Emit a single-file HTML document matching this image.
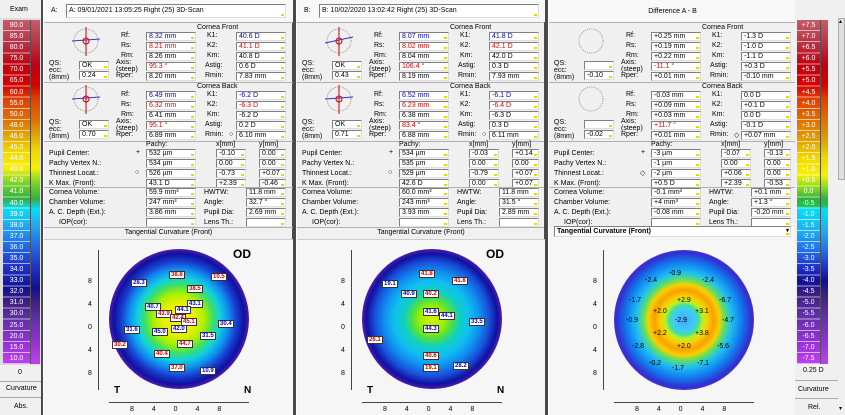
<!DOCTYPE html><html><head><meta charset="utf-8"><style>
*{box-sizing:border-box;margin:0;padding:0}
body{width:845px;height:415px;background:#4a4a4a;font-family:"Liberation Sans",sans-serif;font-size:7px;color:#000;position:relative;overflow:hidden}
div,span{position:absolute}
.p{top:0;height:415px;width:247px;background:#f0f0f0;border-left:1px solid #fff}
.b{height:9px;background:#fff;border:1px solid #808080;border-right-color:#ddd;border-bottom-color:#ddd;padding-left:2px;line-height:7px;font-size:7px;white-space:nowrap}
.b:after{content:"";position:absolute;right:1px;bottom:1px;width:3px;height:2px;background:#e8d800}
.l{white-space:nowrap;line-height:8px}
.t{white-space:nowrap}
.hr{left:0;width:247px;height:1px;background:#b0b0b0}
.bl{color:#0000c0}.rd{color:#e00000}
.map{border-radius:50%}
.lb{font-size:6px;padding:0 1px;background:#fff;border:1px solid #333;line-height:6px;font-weight:bold}
.grid{background-image:repeating-linear-gradient(transparent 0,transparent 10.1px,rgba(255,255,255,.6) 10.1px,rgba(255,255,255,.6) 11.1px)}
</style></head><body>
<!-- left scale -->
<div style="left:0;top:0;width:41px;height:415px;background:#f0f0f0"></div>
<div class="t" style="left:10px;top:6px">Exam</div>
<div style="left:0;top:18px;width:41px;height:347px;background:#ddd"></div>
<div style="left:3px;top:20px;width:37px;height:344px;background:linear-gradient(#c85a6a 0,#b83848 6%,#c00010 13%,#d80000 19%,#e04000 23%,#e07000 29%,#e0a000 33%,#f0d800 38%,#f8f000 43%,#80d820 47%,#30b040 52%,#00e0f8 55%,#20b0f0 59%,#2070e8 65%,#2030c8 72%,#101090 78%,#402080 82%,#6030a8 87%,#9030d0 93%,#c040f0 100%)"></div>
<div class="grid" style="left:3px;top:20px;width:27px;height:344px"></div>
<div style="left:30px;top:20px;width:1px;height:344px;background:#555"></div>
<div style="left:3px;top:20px;width:27px;height:344px;color:#fff;font-size:7px;line-height:11.1px;text-align:center">90.0<br>85.0<br>80.0<br>75.0<br>70.0<br>65.0<br>60.0<br>55.0<br>50.0<br>48.0<br>46.0<br>45.0<br>44.0<br>43.0<br>42.0<br>41.0<br>40.0<br>39.0<br>38.0<br>37.0<br>36.0<br>35.0<br>34.0<br>33.0<br>32.0<br>31.0<br>30.0<br>25.0<br>20.0<br>15.0<br>10.0</div>
<div class="t" style="left:18px;top:369px">0</div>
<div style="left:0;top:381px;width:41px;height:1px;background:#aaa"></div>
<div class="t" style="left:6px;top:385px">Curvature</div>
<div style="left:0;top:397px;width:41px;height:1px;background:#aaa"></div>
<div class="t" style="left:14px;top:403px">Abs.</div>

<!-- PANEL A -->
<div class="p" style="left:43px;width:249px">
<div style="left:0;top:0;width:249px;height:22px;background:#f8f8f8"></div>
<div class="t" style="left:7px;top:7px">A:</div>
<div class="b" style="left:22px;top:4px;width:220px;height:14px;line-height:11px">A: 09/01/2021 13:05:25 Right (25) 3D-Scan</div>
<div class="hr" style="top:22px;width:249px"></div>
<svg style="position:absolute;left:20px;top:24px" width="44" height="36"><circle cx="22" cy="17" r="12" fill="none" stroke="#999" stroke-dasharray="1 1"/><line x1="22" y1="3" x2="22" y2="32" stroke="#c00"/><line x1="8" y1="17" x2="36" y2="15" stroke="#33c"/><circle cx="22" cy="17" r="3" fill="none" stroke="#c00"/></svg>
<div class="t" style="left:153px;top:24px">Cornea Front</div>
<div class="l" style="left:77px;top:32px">Rf:</div><div class="b bl" style="left:102px;top:32px;width:50px">8.32 mm</div>
<div class="l" style="left:77px;top:42px">Rs:</div><div class="b rd" style="left:102px;top:42px;width:50px">8.21 mm</div>
<div class="l" style="left:77px;top:52px">Rm:</div><div class="b" style="left:102px;top:52px;width:50px">8.26 mm</div>
<div class="l" style="left:72px;top:59px;line-height:7px">Axis:<br>(steep)</div><div class="b rd" style="left:102px;top:62px;width:50px">95.3 °</div>
<div class="l" style="left:72px;top:72px">Rper:</div><div class="b" style="left:102px;top:72px;width:50px">8.20 mm</div>
<div class="l" style="left:163px;top:32px">K1:</div><div class="b bl" style="left:192px;top:32px;width:50px">40.6 D</div>
<div class="l" style="left:163px;top:42px">K2:</div><div class="b rd" style="left:192px;top:42px;width:50px">41.1 D</div>
<div class="l" style="left:163px;top:52px">Km:</div><div class="b" style="left:192px;top:52px;width:50px">40.8 D</div>
<div class="l" style="left:161px;top:62px">Astig:</div><div class="b" style="left:192px;top:62px;width:50px">0.6 D</div>
<div class="l" style="left:161px;top:72px">Rmin:</div><div class="b" style="left:192px;top:72px;width:50px">7.83 mm</div>
<div class="l" style="left:5px;top:60px;line-height:7px">QS:<br>ecc:<br>(8mm)</div>
<div class="b" style="left:35px;top:61px;width:30px">OK</div><div class="b" style="left:35px;top:71px;width:30px">0.24</div>
<div class="hr" style="top:82px;width:249px"></div>
<svg style="position:absolute;left:20px;top:82px" width="44" height="36"><circle cx="22" cy="17" r="12" fill="none" stroke="#999" stroke-dasharray="1 1"/><line x1="22" y1="3" x2="22" y2="32" stroke="#c00"/><line x1="8" y1="17" x2="36" y2="15" stroke="#33c"/><circle cx="22" cy="17" r="3" fill="none" stroke="#c00"/></svg>
<div class="t" style="left:153px;top:83px">Cornea Back</div>
<div class="l" style="left:77px;top:91px">Rf:</div><div class="b bl" style="left:102px;top:91px;width:50px">6.49 mm</div>
<div class="l" style="left:77px;top:101px">Rs:</div><div class="b rd" style="left:102px;top:101px;width:50px">6.32 mm</div>
<div class="l" style="left:77px;top:111px">Rm:</div><div class="b" style="left:102px;top:111px;width:50px">6.41 mm</div>
<div class="l" style="left:72px;top:118px;line-height:7px">Axis:<br>(steep)</div><div class="b rd" style="left:102px;top:121px;width:50px">95.1 °</div>
<div class="l" style="left:72px;top:131px">Rper:</div><div class="b" style="left:102px;top:131px;width:50px">6.89 mm</div>
<div class="l" style="left:163px;top:91px">K1:</div><div class="b bl" style="left:192px;top:91px;width:50px">-6.2 D</div>
<div class="l" style="left:163px;top:101px">K2:</div><div class="b rd" style="left:192px;top:101px;width:50px">-6.3 D</div>
<div class="l" style="left:163px;top:111px">Km:</div><div class="b" style="left:192px;top:111px;width:50px">-6.2 D</div>
<div class="l" style="left:161px;top:121px">Astig:</div><div class="b" style="left:192px;top:121px;width:50px">0.2 D</div>
<div class="l" style="left:161px;top:131px">Rmin:</div><div class="t" style="left:185px;top:131px">○</div><div class="b" style="left:192px;top:131px;width:50px">6.10 mm</div>
<div class="l" style="left:5px;top:119px;line-height:7px">QS:<br>ecc:<br>(8mm)</div>
<div class="b" style="left:35px;top:120px;width:30px">OK</div><div class="b" style="left:35px;top:130px;width:30px">0.70</div>
<div class="hr" style="top:141px;width:249px"></div>
<div class="t" style="left:102px;top:141px">Pachy:</div><div class="t" style="left:172px;top:141px">x[mm]</div><div class="t" style="left:215px;top:141px">y[mm]</div>
<div class="l" style="left:5px;top:150px">Pupil Center:</div><div class="t" style="left:92px;top:149px">+</div>
<div class="l" style="left:5px;top:160px">Pachy Vertex N.:</div>
<div class="l" style="left:5px;top:170px">Thinnest Locat.:</div><div class="t" style="left:91px;top:169px">○</div>
<div class="l" style="left:5px;top:180px">K Max. (Front):</div>
<div class="b" style="left:102px;top:149px;width:50px">532 µm</div><div class="b" style="left:172px;top:149px;width:30px">-0.10</div><div class="b" style="left:215px;top:149px;width:27px">0.00</div>
<div class="b" style="left:102px;top:159px;width:50px">534 µm</div><div class="b" style="left:172px;top:159px;width:30px">0.00</div><div class="b" style="left:215px;top:159px;width:27px">0.00</div>
<div class="b" style="left:102px;top:169px;width:50px">526 µm</div><div class="b" style="left:172px;top:169px;width:30px">-0.73</div><div class="b" style="left:215px;top:169px;width:27px">+0.07</div>
<div class="b" style="left:102px;top:179px;width:50px">43.1 D</div><div class="b" style="left:172px;top:179px;width:30px">+2.39</div><div class="b" style="left:215px;top:179px;width:27px">-0.46</div>
<div class="hr" style="top:187px;width:249px"></div>
<div class="l" style="left:5px;top:189px">Cornea Volume:</div><div class="b" style="left:102px;top:188px;width:50px">59.9 mm³</div><div class="l" style="left:160px;top:189px">HWTW:</div><div class="b" style="left:202px;top:188px;width:40px">11.8 mm</div>
<div class="l" style="left:5px;top:199px">Chamber Volume:</div><div class="b" style="left:102px;top:198px;width:50px">247 mm³</div><div class="l" style="left:160px;top:199px">Angle:</div><div class="b" style="left:202px;top:198px;width:40px">32.7 °</div>
<div class="l" style="left:5px;top:209px">A. C. Depth (Ext.):</div><div class="b" style="left:102px;top:208px;width:50px">3.86 mm</div><div class="l" style="left:160px;top:209px">Pupil Dia:</div><div class="b" style="left:202px;top:208px;width:40px">2.69 mm</div>
<div class="l" style="left:15px;top:219px">IOP(cor):</div><div class="b" style="left:102px;top:218px;width:50px"></div><div class="l" style="left:160px;top:219px">Lens Th.:</div><div class="b" style="left:202px;top:218px;width:40px"></div>
<div class="hr" style="top:227px;width:249px"></div>
<div class="t" style="left:0;width:249px;text-align:center;top:229px">Tangential Curvature (Front)</div>
<div style="left:0;top:239px;width:249px;height:176px;background:#f6f6f6;border-top:1px solid #ccc"></div>
<div style="left:54px;top:250px;width:1px;height:140px;background:#444"></div>
<div class="t" style="left:44px;top:270px;line-height:23px">8<br>4<br>0<br>4<br>8</div>
<div style="left:65px;top:402px;width:140px;height:1px;background:#444"></div>
<div class="t" style="left:86px;top:406px;word-spacing:16px">8 4 0 4 8</div>
<div class="map" style="left:65px;top:249px;width:140px;height:140px;background:radial-gradient(circle at 50% 50%,#f0f000 0,#e8f000 16%,#a8f000 26%,#40e060 34%,#10d0e0 42%,#1090f0 50%,#1840d0 58%,#1010a0 66%,#6020b0 72%,#9028d8 78%,#a030e0 100%)"></div>
<div class="t" style="left:189px;top:247px;font-size:12px;font-weight:bold">OD</div>
<div class="t" style="left:70px;top:385px;font-size:10px;font-weight:bold">T</div>
<div class="t" style="left:200px;top:385px;font-size:10px;font-weight:bold">N</div>
<div class="lb" style="left:125px;top:271px;color:#c00">38.8</div><div class="lb" style="left:167px;top:273px;color:#c00">10.5</div><div class="lb" style="left:87px;top:279px;color:#00c">28.3</div>
<div class="lb" style="left:143px;top:285px;color:#c00">38.5</div><div class="lb" style="left:101px;top:303px;color:#00c">40.7</div><div class="lb" style="left:143px;top:300px;color:#00c">43.1</div>
<div class="lb" style="left:112px;top:310px;color:#c00">43.9</div><div class="lb" style="left:126px;top:314px;color:#c00">42.4</div><div class="lb" style="left:131px;top:306px;color:#00c">44.1</div>
<div class="lb" style="left:137px;top:318px;color:#c00">45.1</div><div class="lb" style="left:174px;top:320px;color:#00c">30.4</div><div class="lb" style="left:80px;top:326px;color:#00c">31.6</div>
<div class="lb" style="left:108px;top:328px;color:#00c">45.0</div><div class="lb" style="left:127px;top:325px;color:#00c">42.0</div><div class="lb" style="left:156px;top:332px;color:#00c">31.5</div>
<div class="lb" style="left:68px;top:341px;color:#c00">30.2</div><div class="lb" style="left:133px;top:340px;color:#c00">44.7</div><div class="lb" style="left:110px;top:350px;color:#c00">40.4</div>
<div class="lb" style="left:125px;top:364px;color:#c00">37.0</div><div class="lb" style="left:156px;top:367px;color:#00c">10.9</div>
</div>

<!-- PANEL B -->
<div class="p" style="left:296px;width:248px">
<div style="left:0;top:0;width:248px;height:22px;background:#f8f8f8"></div>
<div class="t" style="left:7px;top:7px">B:</div>
<div class="b" style="left:22px;top:4px;width:220px;height:14px;line-height:11px">B: 10/02/2020 13:02:42 Right (25) 3D-Scan</div>
<div class="hr" style="top:22px"></div>
<svg style="position:absolute;left:20px;top:24px" width="44" height="36"><circle cx="22" cy="17" r="12" fill="none" stroke="#999" stroke-dasharray="1 1"/><line x1="22" y1="3" x2="22" y2="32" stroke="#c00"/><line x1="8" y1="19" x2="36" y2="13" stroke="#33c"/><circle cx="22" cy="17" r="3" fill="none" stroke="#c00"/></svg>
<div class="t" style="left:153px;top:24px">Cornea Front</div>
<div class="l" style="left:77px;top:32px">Rf:</div><div class="b bl" style="left:102px;top:32px;width:50px">8.07 mm</div>
<div class="l" style="left:77px;top:42px">Rs:</div><div class="b rd" style="left:102px;top:42px;width:50px">8.02 mm</div>
<div class="l" style="left:77px;top:52px">Rm:</div><div class="b" style="left:102px;top:52px;width:50px">8.04 mm</div>
<div class="l" style="left:72px;top:59px;line-height:7px">Axis:<br>(steep)</div><div class="b rd" style="left:102px;top:62px;width:50px">106.4 °</div>
<div class="l" style="left:72px;top:72px">Rper:</div><div class="b" style="left:102px;top:72px;width:50px">8.19 mm</div>
<div class="l" style="left:163px;top:32px">K1:</div><div class="b bl" style="left:192px;top:32px;width:50px">41.8 D</div>
<div class="l" style="left:163px;top:42px">K2:</div><div class="b rd" style="left:192px;top:42px;width:50px">42.1 D</div>
<div class="l" style="left:163px;top:52px">Km:</div><div class="b" style="left:192px;top:52px;width:50px">42.0 D</div>
<div class="l" style="left:161px;top:62px">Astig:</div><div class="b" style="left:192px;top:62px;width:50px">0.3 D</div>
<div class="l" style="left:161px;top:72px">Rmin:</div><div class="b" style="left:192px;top:72px;width:50px">7.93 mm</div>
<div class="l" style="left:5px;top:60px;line-height:7px">QS:<br>ecc:<br>(8mm)</div>
<div class="b" style="left:35px;top:61px;width:30px">OK</div><div class="b" style="left:35px;top:71px;width:30px">0.43</div>
<div class="hr" style="top:82px"></div>
<svg style="position:absolute;left:20px;top:82px" width="44" height="36"><circle cx="22" cy="17" r="12" fill="none" stroke="#999" stroke-dasharray="1 1"/><line x1="22" y1="3" x2="22" y2="32" stroke="#c00"/><line x1="8" y1="17" x2="36" y2="15" stroke="#33c"/><circle cx="22" cy="17" r="3" fill="none" stroke="#c00"/></svg>
<div class="t" style="left:153px;top:83px">Cornea Back</div>
<div class="l" style="left:77px;top:91px">Rf:</div><div class="b bl" style="left:102px;top:91px;width:50px">6.52 mm</div>
<div class="l" style="left:77px;top:101px">Rs:</div><div class="b rd" style="left:102px;top:101px;width:50px">6.23 mm</div>
<div class="l" style="left:77px;top:111px">Rm:</div><div class="b" style="left:102px;top:111px;width:50px">6.38 mm</div>
<div class="l" style="left:72px;top:118px;line-height:7px">Axis:<br>(steep)</div><div class="b rd" style="left:102px;top:121px;width:50px">83.4 °</div>
<div class="l" style="left:72px;top:131px">Rper:</div><div class="b" style="left:102px;top:131px;width:50px">6.88 mm</div>
<div class="l" style="left:163px;top:91px">K1:</div><div class="b bl" style="left:192px;top:91px;width:50px">-6.1 D</div>
<div class="l" style="left:163px;top:101px">K2:</div><div class="b rd" style="left:192px;top:101px;width:50px">-6.4 D</div>
<div class="l" style="left:163px;top:111px">Km:</div><div class="b" style="left:192px;top:111px;width:50px">-6.3 D</div>
<div class="l" style="left:161px;top:121px">Astig:</div><div class="b" style="left:192px;top:121px;width:50px">0.3 D</div>
<div class="l" style="left:161px;top:131px">Rmin:</div><div class="t" style="left:185px;top:131px">○</div><div class="b" style="left:192px;top:131px;width:50px">6.11 mm</div>
<div class="l" style="left:5px;top:119px;line-height:7px">QS:<br>ecc:<br>(8mm)</div>
<div class="b" style="left:35px;top:120px;width:30px">OK</div><div class="b" style="left:35px;top:130px;width:30px">0.71</div>
<div class="hr" style="top:141px"></div>
<div class="t" style="left:102px;top:141px">Pachy:</div><div class="t" style="left:172px;top:141px">x[mm]</div><div class="t" style="left:215px;top:141px">y[mm]</div>
<div class="l" style="left:5px;top:150px">Pupil Center:</div><div class="t" style="left:92px;top:149px">+</div>
<div class="l" style="left:5px;top:160px">Pachy Vertex N.:</div>
<div class="l" style="left:5px;top:170px">Thinnest Locat.:</div><div class="t" style="left:91px;top:169px">○</div>
<div class="l" style="left:5px;top:180px">K Max. (Front):</div>
<div class="b" style="left:102px;top:149px;width:50px">534 µm</div><div class="b" style="left:172px;top:149px;width:30px">-0.03</div><div class="b" style="left:215px;top:149px;width:27px">+0.14</div>
<div class="b" style="left:102px;top:159px;width:50px">535 µm</div><div class="b" style="left:172px;top:159px;width:30px">0.00</div><div class="b" style="left:215px;top:159px;width:27px">0.00</div>
<div class="b" style="left:102px;top:169px;width:50px">529 µm</div><div class="b" style="left:172px;top:169px;width:30px">-0.79</div><div class="b" style="left:215px;top:169px;width:27px">+0.07</div>
<div class="b" style="left:102px;top:179px;width:50px">42.6 D</div><div class="b" style="left:172px;top:179px;width:30px">0.00</div><div class="b" style="left:215px;top:179px;width:27px">+0.07</div>
<div class="hr" style="top:187px"></div>
<div class="l" style="left:5px;top:189px">Cornea Volume:</div><div class="b" style="left:102px;top:188px;width:50px">60.0 mm³</div><div class="l" style="left:160px;top:189px">HWTW:</div><div class="b" style="left:202px;top:188px;width:40px">11.8 mm</div>
<div class="l" style="left:5px;top:199px">Chamber Volume:</div><div class="b" style="left:102px;top:198px;width:50px">243 mm³</div><div class="l" style="left:160px;top:199px">Angle:</div><div class="b" style="left:202px;top:198px;width:40px">31.5 °</div>
<div class="l" style="left:5px;top:209px">A. C. Depth (Ext.):</div><div class="b" style="left:102px;top:208px;width:50px">3.93 mm</div><div class="l" style="left:160px;top:209px">Pupil Dia:</div><div class="b" style="left:202px;top:208px;width:40px">2.89 mm</div>
<div class="l" style="left:15px;top:219px">IOP(cor):</div><div class="b" style="left:102px;top:218px;width:50px"></div><div class="l" style="left:160px;top:219px">Lens Th.:</div><div class="b" style="left:202px;top:218px;width:40px"></div>
<div class="hr" style="top:227px"></div>
<div class="t" style="left:0;width:248px;text-align:center;top:229px">Tangential Curvature (Front)</div>
<div style="left:0;top:239px;width:248px;height:176px;background:#f6f6f6;border-top:1px solid #ccc"></div>
<div style="left:54px;top:250px;width:1px;height:140px;background:#444"></div>
<div class="t" style="left:44px;top:270px;line-height:23px">8<br>4<br>0<br>4<br>8</div>
<div style="left:65px;top:402px;width:140px;height:1px;background:#444"></div>
<div class="t" style="left:86px;top:406px;word-spacing:16px">8 4 0 4 8</div>
<div class="map" style="left:65px;top:249px;width:140px;height:140px;background:radial-gradient(circle at 50% 50%,#d8f000 0,#a0f000 12%,#50e040 20%,#10d0c0 28%,#10c0f0 38%,#1090f0 48%,#1850d8 58%,#1010a0 66%,#6020b0 72%,#9028d8 78%,#a030e0 100%)"></div>
<div class="t" style="left:189px;top:247px;font-size:12px;font-weight:bold">OD</div>
<div class="t" style="left:70px;top:385px;font-size:10px;font-weight:bold">T</div>
<div class="t" style="left:200px;top:385px;font-size:10px;font-weight:bold">N</div>
<div class="lb" style="left:122px;top:270px;color:#c00">41.8</div><div class="lb" style="left:85px;top:280px;color:#00c">19.1</div><div class="lb" style="left:155px;top:277px;color:#c00">41.8</div>
<div class="lb" style="left:104px;top:290px;color:#00c">40.9</div><div class="lb" style="left:126px;top:290px;color:#c00">40.2</div><div class="lb" style="left:126px;top:308px;color:#00c">41.6</div>
<div class="lb" style="left:142px;top:312px;color:#00c">44.1</div><div class="lb" style="left:172px;top:318px;color:#00c">33.5</div><div class="lb" style="left:126px;top:325px;color:#00c">44.3</div>
<div class="lb" style="left:70px;top:336px;color:#c00">26.1</div><div class="lb" style="left:126px;top:352px;color:#c00">40.6</div><div class="lb" style="left:156px;top:362px;color:#00c">28.2</div><div class="lb" style="left:126px;top:364px;color:#c00">19.1</div>
</div>

<!-- PANEL C -->
<div class="p" style="left:548px;width:247px">
<div style="left:0;top:0;width:247px;height:22px;background:#f8f8f8"></div>
<div class="t" style="left:0;width:247px;text-align:center;top:8px">Difference A - B</div>
<div class="hr" style="top:22px"></div>
<svg style="position:absolute;left:20px;top:24px" width="44" height="36"><circle cx="22" cy="17" r="12" fill="none" stroke="#999" stroke-dasharray="1 1"/></svg>
<div class="t" style="left:153px;top:24px">Cornea Front</div>
<div class="l" style="left:77px;top:32px">Rf:</div><div class="b" style="left:102px;top:32px;width:50px">+0.25 mm</div>
<div class="l" style="left:77px;top:42px">Rs:</div><div class="b" style="left:102px;top:42px;width:50px">+0.19 mm</div>
<div class="l" style="left:77px;top:52px">Rm:</div><div class="b" style="left:102px;top:52px;width:50px">+0.22 mm</div>
<div class="l" style="left:72px;top:59px;line-height:7px">Axis:<br>(steep)</div><div class="b rd" style="left:102px;top:62px;width:50px">-11.1 °</div>
<div class="l" style="left:72px;top:72px">Rper:</div><div class="b" style="left:102px;top:72px;width:50px">+0.01 mm</div>
<div class="l" style="left:163px;top:32px">K1:</div><div class="b" style="left:192px;top:32px;width:50px">-1.3 D</div>
<div class="l" style="left:163px;top:42px">K2:</div><div class="b" style="left:192px;top:42px;width:50px">-1.0 D</div>
<div class="l" style="left:163px;top:52px">Km:</div><div class="b" style="left:192px;top:52px;width:50px">-1.1 D</div>
<div class="l" style="left:161px;top:62px">Astig:</div><div class="b" style="left:192px;top:62px;width:50px">+0.3 D</div>
<div class="l" style="left:161px;top:72px">Rmin:</div><div class="b" style="left:192px;top:72px;width:50px">-0.10 mm</div>
<div class="l" style="left:5px;top:60px;line-height:7px">QS:<br>ecc:<br>(8mm)</div>
<div class="b" style="left:35px;top:61px;width:30px"></div><div class="b" style="left:35px;top:71px;width:30px">-0.10</div>
<div class="hr" style="top:82px"></div>
<svg style="position:absolute;left:20px;top:82px" width="44" height="36"><circle cx="22" cy="17" r="12" fill="none" stroke="#999" stroke-dasharray="1 1"/></svg>
<div class="t" style="left:153px;top:83px">Cornea Back</div>
<div class="l" style="left:77px;top:91px">Rf:</div><div class="b" style="left:102px;top:91px;width:50px">-0.03 mm</div>
<div class="l" style="left:77px;top:101px">Rs:</div><div class="b" style="left:102px;top:101px;width:50px">+0.09 mm</div>
<div class="l" style="left:77px;top:111px">Rm:</div><div class="b" style="left:102px;top:111px;width:50px">+0.03 mm</div>
<div class="l" style="left:72px;top:118px;line-height:7px">Axis:<br>(steep)</div><div class="b rd" style="left:102px;top:121px;width:50px">+11.7 °</div>
<div class="l" style="left:72px;top:131px">Rper:</div><div class="b" style="left:102px;top:131px;width:50px">+0.01 mm</div>
<div class="l" style="left:163px;top:91px">K1:</div><div class="b" style="left:192px;top:91px;width:50px">0.0 D</div>
<div class="l" style="left:163px;top:101px">K2:</div><div class="b" style="left:192px;top:101px;width:50px">+0.1 D</div>
<div class="l" style="left:163px;top:111px">Km:</div><div class="b" style="left:192px;top:111px;width:50px">0.0 D</div>
<div class="l" style="left:161px;top:121px">Astig:</div><div class="b" style="left:192px;top:121px;width:50px">-0.1 D</div>
<div class="l" style="left:161px;top:131px">Rmin:</div><div class="t" style="left:185px;top:131px">◇</div><div class="b" style="left:192px;top:131px;width:50px">+0.07 mm</div>
<div class="l" style="left:5px;top:119px;line-height:7px">QS:<br>ecc:<br>(8mm)</div>
<div class="b" style="left:35px;top:120px;width:30px"></div><div class="b" style="left:35px;top:130px;width:30px">-0.02</div>
<div class="hr" style="top:141px"></div>
<div class="t" style="left:102px;top:141px">Pachy:</div><div class="t" style="left:172px;top:141px">x[mm]</div><div class="t" style="left:215px;top:141px">y[mm]</div>
<div class="l" style="left:5px;top:150px">Pupil Center:</div><div class="t" style="left:92px;top:149px">+</div>
<div class="l" style="left:5px;top:160px">Pachy Vertex N.:</div>
<div class="l" style="left:5px;top:170px">Thinnest Locat.:</div><div class="t" style="left:91px;top:169px">◇</div>
<div class="l" style="left:5px;top:180px">K Max. (Front):</div>
<div class="b" style="left:102px;top:149px;width:50px">-3 µm</div><div class="b" style="left:172px;top:149px;width:30px">-0.07</div><div class="b" style="left:215px;top:149px;width:27px">-0.13</div>
<div class="b" style="left:102px;top:159px;width:50px">-1 µm</div><div class="b" style="left:172px;top:159px;width:30px">0.00</div><div class="b" style="left:215px;top:159px;width:27px">0.00</div>
<div class="b" style="left:102px;top:169px;width:50px">-2 µm</div><div class="b" style="left:172px;top:169px;width:30px">+0.06</div><div class="b" style="left:215px;top:169px;width:27px">0.00</div>
<div class="b" style="left:102px;top:179px;width:50px">+0.5 D</div><div class="b" style="left:172px;top:179px;width:30px">+2.39</div><div class="b" style="left:215px;top:179px;width:27px">-0.53</div>
<div class="hr" style="top:187px"></div>
<div class="l" style="left:5px;top:189px">Cornea Volume:</div><div class="b" style="left:102px;top:188px;width:50px">-0.1 mm³</div><div class="l" style="left:160px;top:189px">HWTW:</div><div class="b" style="left:202px;top:188px;width:40px">+0.1 mm</div>
<div class="l" style="left:5px;top:199px">Chamber Volume:</div><div class="b" style="left:102px;top:198px;width:50px">+4 mm³</div><div class="l" style="left:160px;top:199px">Angle:</div><div class="b" style="left:202px;top:198px;width:40px">+1.3 °</div>
<div class="l" style="left:5px;top:209px">A. C. Depth (Ext.):</div><div class="b" style="left:102px;top:208px;width:50px">-0.08 mm</div><div class="l" style="left:160px;top:209px">Pupil Dia:</div><div class="b" style="left:202px;top:208px;width:40px">-0.20 mm</div>
<div class="l" style="left:15px;top:219px">IOP(cor):</div><div class="b" style="left:102px;top:218px;width:50px"></div><div class="l" style="left:160px;top:219px">Lens Th.:</div><div class="b" style="left:202px;top:218px;width:40px"></div>
<div class="hr" style="top:227px"></div>
<div style="left:0;top:227px;width:247px;height:188px;background:#f6f6f6"></div>
<div class="b" style="left:5px;top:226px;width:237px;height:11px;font-weight:bold;line-height:9px">Tangential Curvature (Front)<span style="right:1px;top:0;font-size:6px">▾</span></div>
<div style="left:54px;top:250px;width:1px;height:140px;background:#444"></div>
<div class="t" style="left:44px;top:270px;line-height:23px">8<br>4<br>0<br>4<br>8</div>
<div style="left:65px;top:402px;width:140px;height:1px;background:#444"></div>
<div class="t" style="left:86px;top:406px;word-spacing:16px">8 4 0 4 8</div>
<div class="map" style="left:65px;top:250px;width:140px;height:140px;background:radial-gradient(circle at 50% 50%,#40a8ff 0,#40c8ff 10%,#40e0a0 15%,#c0f020 19%,#f8d000 24%,#f8a000 30%,#f8d000 36%,#60e060 41%,#20c0f0 48%,#1080f0 58%,#3030d0 68%,#8030d8 78%,#c060a0 86%,#d86060 92%,#d86060 100%)"></div>
<div class="t" style="left:120px;top:270px;color:#000">-0.9</div><div class="t" style="left:96px;top:277px">-2.4</div><div class="t" style="left:153px;top:277px">-2.4</div>
<div class="t" style="left:80px;top:297px">-1.7</div><div class="t" style="left:128px;top:297px">+2.9</div><div class="t" style="left:170px;top:297px">-6.7</div>
<div class="t" style="left:104px;top:308px">+2.0</div><div class="t" style="left:146px;top:308px">+3.1</div>
<div class="t" style="left:77px;top:317px">-0.9</div><div class="t" style="left:126px;top:317px">-2.9</div><div class="t" style="left:173px;top:317px">-4.7</div>
<div class="t" style="left:104px;top:330px">+2.2</div><div class="t" style="left:146px;top:330px">+3.8</div>
<div class="t" style="left:83px;top:343px">-2.8</div><div class="t" style="left:128px;top:343px">+2.0</div><div class="t" style="left:168px;top:343px">-5.6</div>
<div class="t" style="left:100px;top:360px">-0.2</div><div class="t" style="left:148px;top:360px">-7.1</div><div class="t" style="left:123px;top:365px">-1.7</div>
</div>

<!-- right scale -->
<div style="left:795px;top:0;width:50px;height:415px;background:#f0f0f0"></div>
<div style="left:838px;top:18px;width:7px;height:162px;background:#e0e0e0;border:1px solid #aaa"></div>
<div class="t" style="left:839px;top:18px;font-size:6px">▴</div>
<div class="t" style="left:839px;top:405px;font-size:6px">▾</div>
<div style="left:797px;top:20px;width:31px;height:344px;background:linear-gradient(#c85a6a 0,#b83848 6%,#c00010 13%,#d80000 19%,#e04000 23%,#e07000 29%,#e0a000 35%,#f0d800 40%,#f8f000 45%,#80d820 49%,#30b040 52%,#20c050 54%,#00e0f8 55%,#20b0f0 61%,#2070e8 67%,#2030c8 72%,#101090 76%,#402080 80%,#6030a8 86%,#9030d0 93%,#c040f0 100%)"></div>
<div class="grid" style="left:797px;top:20px;width:23px;height:344px"></div>
<div style="left:820px;top:20px;width:1px;height:344px;background:#555"></div>
<div style="left:797px;top:20px;width:23px;height:344px;color:#fff;font-size:7px;line-height:11.1px;text-align:center">+7.5<br>+7.0<br>+6.5<br>+6.0<br>+5.5<br>+5.0<br>+4.5<br>+4.0<br>+3.5<br>+3.0<br>+2.5<br>+2.0<br>+1.5<br>+1.0<br>+0.5<br>0.0<br>-0.5<br>-1.0<br>-1.5<br>-2.0<br>-2.5<br>-3.0<br>-3.5<br>-4.0<br>-4.5<br>-5.0<br>-5.5<br>-6.0<br>-6.5<br>-7.0<br>-7.5</div>
<div class="t" style="left:803px;top:367px">0.25 D</div>
<div style="left:795px;top:380px;width:43px;height:1px;background:#aaa"></div>
<div class="t" style="left:798px;top:386px">Curvature</div>
<div style="left:795px;top:398px;width:43px;height:1px;background:#aaa"></div>
<div class="t" style="left:808px;top:404px">Rel.</div>
</body></html>
